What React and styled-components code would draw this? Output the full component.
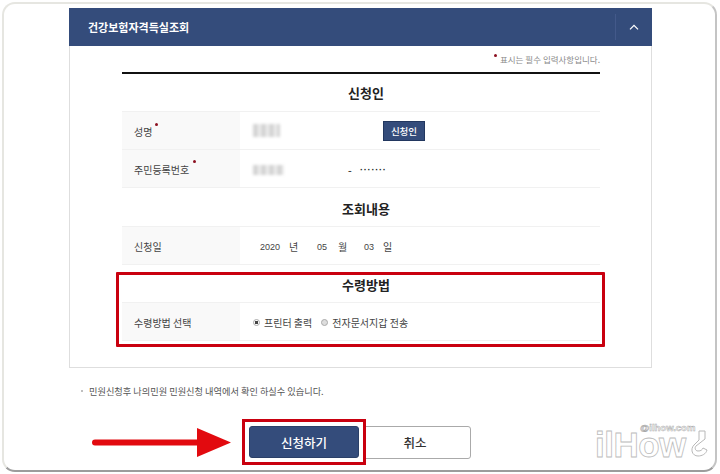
import React from 'react'
import styled, { createGlobalStyle } from 'styled-components'

const Global = createGlobalStyle`
  html, body { margin: 0; padding: 0; background: #fff; }
  body {
    width: 720px;
    height: 474px;
    overflow: hidden;
    font-family: "Noto Sans CJK KR", "Noto Sans", sans-serif;
    color: #333;
  }
`

const Frame = styled.div`
  position: relative;
  box-sizing: border-box;
  width: 715px;
  height: 470px;
  margin: 2px 0 0 2px;
  padding: 4px 0 0 65px;
  background: #fff;
  border: 2px solid #e6e6e1;
  border-right-color: #c4c4c4;
  border-bottom-color: #9c9c9c;
  border-radius: 13px;
`

const Panel = styled.section`
  box-sizing: border-box;
  width: 583px;
  height: 360px;
  background: #fff;
  border: 1px solid #dedede;
  border-top: 0;
`

const Header = styled.header`
  display: flex;
  align-items: center;
  justify-content: space-between;
  height: 38px;
  margin: 0 -1px;
  padding-left: 19px;
  background: #344c7b;
  color: #fff;
`

const Title = styled.h2`
  margin: 0;
  font-size: 11px;
  font-weight: 700;
`

const Toggle = styled.div`
  display: flex;
  align-items: center;
  justify-content: center;
  width: 36px;
  height: 26px;
  border-left: 1px solid #43598a;
`

const Body = styled.div`
  margin: 0 51px 0 52px;
`

const RequiredNote = styled.p`
  display: flex;
  justify-content: flex-end;
  box-sizing: border-box;
  height: 28px;
  margin: 0;
  padding-top: 6px;
  border-bottom: 2px solid #111;
  font-size: 8.5px;
  line-height: 15px;
  color: #8a8a8a;
`

const Dot = styled.i`
  display: inline-block;
  flex: none;
  width: 3px;
  height: 3px;
  border-radius: 50%;
  background: #8c1020;
  margin: ${p => p.$m || '0'};
  vertical-align: top;
`

const Heading = styled.h3`
  display: flex;
  align-items: center;
  justify-content: center;
  box-sizing: border-box;
  height: ${p => p.$h || 38}px;
  margin: 0;
  padding: ${p => p.$pt || 0}px 0 ${p => p.$pb || 0}px 10px;
  font-size: 13px;
  font-weight: 700;
  color: #222;
`

const Table = styled.div`
  border-top: 1px solid #f1f1f1;
`

const Row = styled.div`
  display: grid;
  grid-template-columns: 118px 1fr;
  height: 37px;
  border-bottom: 1px solid #f1f1f1;
`

const Label = styled.div`
  display: flex;
  align-items: center;
  padding: 2px 0 0 12px;
  background: #f9f9f9;
  font-size: 10px;
  color: #444;
`

const LabelDot = styled(Dot)`
  align-self: flex-start;
  margin: ${p => p.$m};
`

const Value = styled.div`
  display: flex;
  align-items: center;
  padding: ${p => p.$pt ?? 2}px 0 0 ${p => p.$pad || 13}px;
  font-size: 10px;
  color: #444;
`

const Slot = styled.div`
  display: flex;
  align-items: center;
  flex: none;
  width: ${p => p.$w}px;
`

const Masked = styled.div`
  width: ${p => p.$w}px;
  height: ${p => p.$h}px;
  background: repeating-linear-gradient(90deg, #d4d4d4 0 5px, #eeeeee 5px 8px);
  filter: blur(1.5px);
`

const SmallButton = styled.button`
  width: 42px;
  height: 20px;
  padding: 0;
  border: 1px solid #22375f;
  background: #344c7b;
  color: #fff;
  font: 500 9.5px "Noto Sans CJK KR", sans-serif;
`

const Dash = styled.span`
  width: 12px;
  font-weight: 700;
`

const Secret = styled.span`
  font: 700 9px "Liberation Sans", sans-serif;
  letter-spacing: 0.8px;
  color: #222;
`

const DatePart = styled.span`
  flex: none;
  width: ${p => p.$w}px;
  font-family: ${p => (p.$num ? '"Liberation Sans", sans-serif' : 'inherit')};
  font-size: ${p => (p.$num ? '9px' : '10px')};
`

const RedBox = styled.div`
  box-sizing: border-box;
  height: 75px;
  margin: 7px -5px 0 -6px;
  padding: 0 2px 0 3px;
  border: 3px solid #c9000f;
  border-radius: 1px;
`

const Radio = styled.span`
  box-sizing: border-box;
  flex: none;
  width: 7px;
  height: 7px;
  margin-right: 4px;
  border-radius: 50%;
  border: 1px solid #aaa;
  background: ${p => (p.$on ? 'radial-gradient(circle, #444 0 1.6px, #fff 2px)' : '#ddd')};
`

const RadioText = styled.span`
  margin-right: ${p => p.$gap || 0}px;
  font-size: 10px;
`

const Notice = styled.p`
  margin: 16px 0 0 12px;
  font-size: 9.2px;
  line-height: 14px;
  color: #555;
  &::before {
    content: '';
    display: inline-block;
    width: 2px;
    height: 2px;
    margin: 0 6px 3px 0;
    border-radius: 50%;
    background: #aaa;
  }
`

const Actions = styled.div`
  display: flex;
  align-items: center;
  height: 46px;
  margin: 21px 0 0 23px;
`

const Arrow = styled.svg`
  flex: none;
  width: 139px;
  height: 29px;
  margin: 1px 11px 0 0;
`

const ButtonBox = styled.div`
  position: relative;
  z-index: 1;
  box-sizing: border-box;
  flex: none;
  width: 124px;
  height: 46px;
  padding: 4px;
  border: 3px solid #c9000f;
  background: #fff;
`

const Submit = styled.button`
  display: block;
  width: 110px;
  height: 32px;
  padding: 0;
  border: 1px solid #2b4068;
  border-radius: 3px;
  background: #344c7b;
  color: #fff;
  font: 500 12.5px "Noto Sans CJK KR", sans-serif;
`

const Cancel = styled.button`
  flex: none;
  width: 112px;
  height: 33px;
  margin-left: -7px;
  padding: 0;
  border: 1px solid #aaa;
  border-radius: 3px;
  background: #fff;
  color: #333;
  font: 500 12.5px "Noto Sans CJK KR", sans-serif;
`

const Watermark = styled.div`
  position: absolute;
  left: 591px;
  top: 420px;
  width: 120px;
  height: 38px;
  color: transparent;
`

const MarkSite = styled.span`
  position: absolute;
  left: 45px;
  top: 0;
  font: 700 9.5px/8px "Liberation Sans", sans-serif;
  color: #fff;
  -webkit-text-stroke: 0.5px #aaa;
`

const MarkName = styled.span`
  position: absolute;
  left: 0;
  top: 8px;
  font: 700 35px/25px "Liberation Sans", sans-serif;
  letter-spacing: -0.5px;
  -webkit-text-stroke: 0.8px #bcbcbc;
`

const MarkHook = styled.svg`
  position: absolute;
  left: 95px;
  top: 6px;
  width: 18px;
  height: 27px;
`

function App() {
  return (
    <>
      <Global />
      <Frame>
        <Panel>
          <Header>
            <Title>건강보험자격득실조회</Title>
            <Toggle>
              <svg width="10" height="6" viewBox="0 0 10 6" fill="none" stroke="#fff" strokeWidth="1.3">
                <path d="M1 5.4 5 1.4l4 4" />
              </svg>
            </Toggle>
          </Header>
          <Body>
            <RequiredNote>
              <Dot $m="2px 3px 0 0" />
              표시는 필수 입력사항입니다.
            </RequiredNote>
            <Heading $h={37}>신청인</Heading>
            <Table>
              <Row>
                <Label>
                  성명
                  <LabelDot $m="9px 0 0 3px" />
                </Label>
                <Value $pt={0}>
                  <Slot $w={130}><Masked $w={27} $h={13} /></Slot>
                  <SmallButton>신청인</SmallButton>
                </Value>
              </Row>
              <Row>
                <Label>
                  주민등록번호
                  <LabelDot $m="8px 0 0 4px" />
                </Label>
                <Value>
                  <Slot $w={95}><Masked $w={31} $h={10} /></Slot>
                  <Dash>-</Dash>
                  <Secret>·······</Secret>
                </Value>
              </Row>
            </Table>
            <Heading $pt={2}>조회내용</Heading>
            <Table>
              <Row>
                <Label>신청일</Label>
                <Value $pad={20}>
                  <DatePart $num $w={29}>2020</DatePart>
                  <DatePart $w={28}>년</DatePart>
                  <DatePart $num $w={21}>05</DatePart>
                  <DatePart $w={26}>월</DatePart>
                  <DatePart $num $w={19}>03</DatePart>
                  <DatePart $w={12}>일</DatePart>
                </Value>
              </Row>
            </Table>
            <RedBox>
              <Heading $h={27} $pb={8}>수령방법</Heading>
              <Table>
                <Row>
                  <Label>수령방법 선택</Label>
                  <Value>
                    <Radio $on />
                    <RadioText $gap={9}>프린터 출력</RadioText>
                    <Radio />
                    <RadioText>전자문서지갑 전송</RadioText>
                  </Value>
                </Row>
              </Table>
            </RedBox>
          </Body>
        </Panel>
        <Notice>민원신청후 나의민원 민원신청 내역에서 확인 하실수 있습니다.</Notice>
        <Actions>
          <Arrow viewBox="0 0 139 29">
            <path d="M3 11.5H105V0L139 14.5 105 29V17.5H3a3 3 0 0 1 0-6Z" fill="#e20a0f" />
          </Arrow>
          <ButtonBox>
            <Submit>신청하기</Submit>
          </ButtonBox>
          <Cancel>취소</Cancel>
        </Actions>
        <Watermark>
          <MarkName>ilHow</MarkName>
          <MarkSite>@ilhow.com</MarkSite>
          <MarkHook viewBox="0 0 18 27" fill="none" stroke="#b8b8b8" strokeWidth="1">
            <path d="M9 1h6v8l-9 7c-1.5 1.5-1 5 2 5s4-1 5-3l4 2c-1 4-5 6-9 6-6 0-8-7-4-11l5-5V7H9Z" />
          </MarkHook>
        </Watermark>
      </Frame>
    </>
  )
}

export default App
